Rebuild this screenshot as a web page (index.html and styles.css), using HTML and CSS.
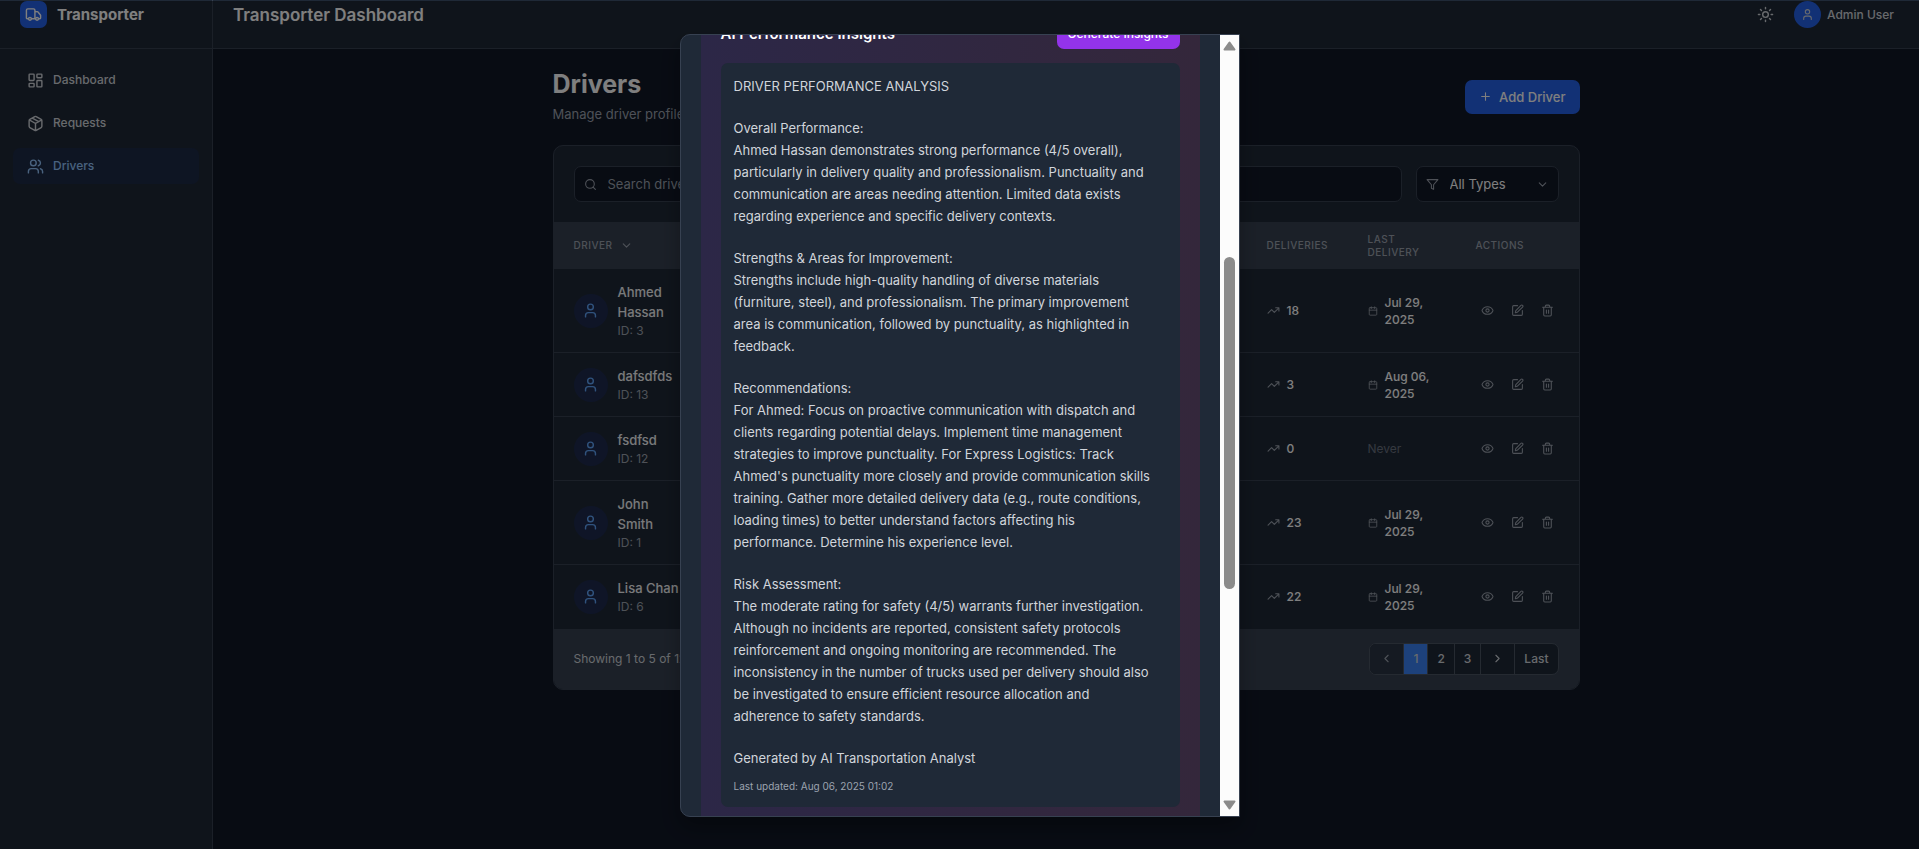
FILE: index.html
```html
<!DOCTYPE html>
<html lang="en">
<head>
<meta charset="utf-8">
<title>Transporter Dashboard</title>
<link rel="stylesheet" href="styles.css">
</head>
<body>
<svg class="sprite" aria-hidden="true">
  <symbol id="truck" viewBox="0 0 24 24"><path d="M14 18V6a2 2 0 0 0-2-2H4a2 2 0 0 0-2 2v11a1 1 0 0 0 1 1h2M15 18H9M19 18h2a1 1 0 0 0 1-1v-3.65a1 1 0 0 0-.22-.624l-3.48-4.35A1 1 0 0 0 17.52 8H14"/><circle cx="17" cy="18" r="2"/><circle cx="7" cy="18" r="2"/></symbol>
  <symbol id="dashboard" viewBox="0 0 24 24"><rect width="7" height="9" x="3" y="3" rx="1"/><rect width="7" height="5" x="14" y="3" rx="1"/><rect width="7" height="9" x="14" y="12" rx="1"/><rect width="7" height="5" x="3" y="16" rx="1"/></symbol>
  <symbol id="package" viewBox="0 0 24 24"><path d="m7.5 4.27 9 5.15M21 8a2 2 0 0 0-1-1.73l-7-4a2 2 0 0 0-2 0l-7 4A2 2 0 0 0 3 8v8a2 2 0 0 0 1 1.73l7 4a2 2 0 0 0 2 0l7-4A2 2 0 0 0 21 16ZM3.3 7l8.7 5 8.7-5M12 22V12"/></symbol>
  <symbol id="users" viewBox="0 0 24 24"><path d="M16 21v-2a4 4 0 0 0-4-4H6a4 4 0 0 0-4 4v2M22 21v-2a4 4 0 0 0-3-3.87M16 3.13a4 4 0 0 1 0 7.75"/><circle cx="9" cy="7" r="4"/></symbol>
  <symbol id="user" viewBox="0 0 24 24"><path d="M19 21v-2a4 4 0 0 0-4-4H9a4 4 0 0 0-4 4v2"/><circle cx="12" cy="7" r="4"/></symbol>
  <symbol id="sun" viewBox="0 0 24 24"><circle cx="12" cy="12" r="4"/><path d="M12 2v2M12 20v2M4.93 4.93l1.41 1.41M17.66 17.66l1.41 1.41M2 12h2M20 12h2M6.34 17.66l-1.41 1.41M19.07 4.93l-1.41 1.41"/></symbol>
  <symbol id="plus" viewBox="0 0 24 24"><path d="M5 12h14M12 5v14"/></symbol>
  <symbol id="search" viewBox="0 0 24 24"><circle cx="11" cy="11" r="8"/><path d="m21 21-4.3-4.3"/></symbol>
  <symbol id="filter" viewBox="0 0 24 24"><path d="M22 3H2l8 9.46V19l4 2v-8.54L22 3z"/></symbol>
  <symbol id="down" viewBox="0 0 24 24"><path d="m6 9 6 6 6-6"/></symbol>
  <symbol id="left" viewBox="0 0 24 24"><path d="m15 18-6-6 6-6"/></symbol>
  <symbol id="right" viewBox="0 0 24 24"><path d="m9 18 6-6-6-6"/></symbol>
  <symbol id="trend" viewBox="0 0 24 24"><path d="m22 7-8.5 8.5-5-5L2 17M16 7h6v6"/></symbol>
  <symbol id="calendar" viewBox="0 0 24 24"><rect width="18" height="18" x="3" y="4" rx="2"/><path d="M8 2v4M16 2v4M3 10h18"/></symbol>
  <symbol id="eye" viewBox="0 0 24 24"><path d="M2.06 12.35a1 1 0 0 1 0-.7 10.75 10.75 0 0 1 19.88 0 1 1 0 0 1 0 .7 10.75 10.75 0 0 1-19.88 0"/><circle cx="12" cy="12" r="3"/></symbol>
  <symbol id="edit" viewBox="0 0 24 24"><path d="M12 3H5a2 2 0 0 0-2 2v14a2 2 0 0 0 2 2h14a2 2 0 0 0 2-2v-7"/><path d="M18.375 2.625a1 1 0 0 1 3 3l-9.013 9.014a2 2 0 0 1-.853.505l-2.873.84a.5.5 0 0 1-.62-.62l.84-2.873a2 2 0 0 1 .506-.852z"/></symbol>
  <symbol id="trash" viewBox="0 0 24 24"><path d="M3 6h18M19 6v14c0 1-1 2-2 2H7c-1 0-2-1-2-2V6M8 6V4c0-1 1-2 2-2h4c1 0 2 1 2 2v2M10 11v6M14 11v6"/></symbol>
</svg>

<div class="app">
  <aside class="sidebar">
    <div class="brand">
      <span class="brand-mark"><svg class="icon icon-md"><use href="#truck"/></svg></span>
      <span class="brand-name">Transporter</span>
    </div>
    <nav class="nav">
      <a class="nav-link" href="#"><svg class="icon icon-md"><use href="#dashboard"/></svg>Dashboard</a>
      <a class="nav-link" href="#"><svg class="icon icon-md"><use href="#package"/></svg>Requests</a>
      <a class="nav-link active" href="#" aria-current="page"><svg class="icon icon-md"><use href="#users"/></svg>Drivers</a>
    </nav>
  </aside>

  <div class="content">
    <header class="topbar">
      <h2 class="topbar-title">Transporter Dashboard</h2>
      <div class="topbar-tools">
        <button class="icon-button" type="button" aria-label="Toggle theme"><svg class="icon icon-md"><use href="#sun"/></svg></button>
        <div class="account">
          <span class="account-avatar"><svg class="icon icon-sm"><use href="#user"/></svg></span>
          <span>Admin User</span>
        </div>
      </div>
    </header>

    <main class="main">
      <div class="page-head">
        <div>
          <h1 class="page-title">Drivers</h1>
          <p class="page-sub">Manage driver profiles</p>
        </div>
        <button class="add-button" type="button"><svg class="icon icon-sm"><use href="#plus"/></svg>Add Driver</button>
      </div>

      <section class="card">
        <div class="filters">
          <label class="field field-search">
            <svg class="icon icon-sm"><use href="#search"/></svg>
            <input class="control" type="text" placeholder="Search drivers..." aria-label="Search drivers">
          </label>
          <label class="field field-type">
            <svg class="icon icon-sm"><use href="#filter"/></svg>
            <select class="control" aria-label="Type"><option>All Types</option></select>
            <svg class="icon icon-sm"><use href="#down"/></svg>
          </label>
        </div>

        <table class="table">
          <colgroup><col class="col-driver"><col><col class="col-deliveries"><col class="col-last"><col class="col-actions"></colgroup>
          <thead>
            <tr>
              <th><span class="sort">Driver <svg class="icon icon-sm"><use href="#down"/></svg></span></th>
              <td></td>
              <th>Deliveries</th>
              <th>Last Delivery</th>
              <th>Actions</th>
            </tr>
          </thead>
          <tbody>
            <tr>
              <td><div class="driver"><span class="avatar"><svg class="icon icon-md"><use href="#user"/></svg></span><div><div class="name">Ahmed Hassan</div><div class="id">ID: 3</div></div></div></td>
              <td></td>
              <td><div class="stat"><svg class="icon icon-sm"><use href="#trend"/></svg>18</div></td>
              <td><div class="stat date"><svg class="icon icon-xs"><use href="#calendar"/></svg><span>Jul 29, 2025</span></div></td>
              <td><div class="actions"><button type="button" aria-label="View"><svg class="icon icon-sm"><use href="#eye"/></svg></button><button type="button" aria-label="Edit"><svg class="icon icon-sm"><use href="#edit"/></svg></button><button type="button" aria-label="Delete"><svg class="icon icon-sm"><use href="#trash"/></svg></button></div></td>
            </tr>
            <tr>
              <td><div class="driver"><span class="avatar"><svg class="icon icon-md"><use href="#user"/></svg></span><div><div class="name">dafsdfds</div><div class="id">ID: 13</div></div></div></td>
              <td></td>
              <td><div class="stat"><svg class="icon icon-sm"><use href="#trend"/></svg>3</div></td>
              <td><div class="stat date"><svg class="icon icon-xs"><use href="#calendar"/></svg><span>Aug 06, 2025</span></div></td>
              <td><div class="actions"><button type="button" aria-label="View"><svg class="icon icon-sm"><use href="#eye"/></svg></button><button type="button" aria-label="Edit"><svg class="icon icon-sm"><use href="#edit"/></svg></button><button type="button" aria-label="Delete"><svg class="icon icon-sm"><use href="#trash"/></svg></button></div></td>
            </tr>
            <tr>
              <td><div class="driver"><span class="avatar"><svg class="icon icon-md"><use href="#user"/></svg></span><div><div class="name">fsdfsd</div><div class="id">ID: 12</div></div></div></td>
              <td></td>
              <td><div class="stat"><svg class="icon icon-sm"><use href="#trend"/></svg>0</div></td>
              <td><span class="never">Never</span></td>
              <td><div class="actions"><button type="button" aria-label="View"><svg class="icon icon-sm"><use href="#eye"/></svg></button><button type="button" aria-label="Edit"><svg class="icon icon-sm"><use href="#edit"/></svg></button><button type="button" aria-label="Delete"><svg class="icon icon-sm"><use href="#trash"/></svg></button></div></td>
            </tr>
            <tr>
              <td><div class="driver"><span class="avatar"><svg class="icon icon-md"><use href="#user"/></svg></span><div><div class="name">John<br>Smith</div><div class="id">ID: 1</div></div></div></td>
              <td></td>
              <td><div class="stat"><svg class="icon icon-sm"><use href="#trend"/></svg>23</div></td>
              <td><div class="stat date"><svg class="icon icon-xs"><use href="#calendar"/></svg><span>Jul 29, 2025</span></div></td>
              <td><div class="actions"><button type="button" aria-label="View"><svg class="icon icon-sm"><use href="#eye"/></svg></button><button type="button" aria-label="Edit"><svg class="icon icon-sm"><use href="#edit"/></svg></button><button type="button" aria-label="Delete"><svg class="icon icon-sm"><use href="#trash"/></svg></button></div></td>
            </tr>
            <tr>
              <td><div class="driver"><span class="avatar"><svg class="icon icon-md"><use href="#user"/></svg></span><div><div class="name">Lisa Chan</div><div class="id">ID: 6</div></div></div></td>
              <td></td>
              <td><div class="stat"><svg class="icon icon-sm"><use href="#trend"/></svg>22</div></td>
              <td><div class="stat date"><svg class="icon icon-xs"><use href="#calendar"/></svg><span>Jul 29, 2025</span></div></td>
              <td><div class="actions"><button type="button" aria-label="View"><svg class="icon icon-sm"><use href="#eye"/></svg></button><button type="button" aria-label="Edit"><svg class="icon icon-sm"><use href="#edit"/></svg></button><button type="button" aria-label="Delete"><svg class="icon icon-sm"><use href="#trash"/></svg></button></div></td>
            </tr>
          </tbody>
        </table>

        <footer class="card-foot">
          <span>Showing 1 to 5 of 12</span>
          <div class="pager">
            <button class="page-step" type="button" aria-label="Previous" disabled><svg class="icon icon-sm"><use href="#left"/></svg></button>
            <button class="current" type="button">1</button>
            <button type="button">2</button>
            <button type="button">3</button>
            <button class="page-step" type="button" aria-label="Next"><svg class="icon icon-sm"><use href="#right"/></svg></button>
            <button type="button">Last</button>
          </div>
        </footer>
      </section>
    </main>
  </div>
</div>

<div class="overlay">
  <div class="modal" role="dialog" aria-modal="true" aria-labelledby="insights-title">
    <div class="modal-view">
      <section class="insights">
        <div class="insights-head">
          <h3 id="insights-title" class="insights-title">AI Performance Insights</h3>
          <button class="generate" type="button">Generate Insights</button>
        </div>
        <article class="report">
          <p>DRIVER PERFORMANCE ANALYSIS</p>
          <p>Overall Performance:<br>Ahmed Hassan demonstrates strong performance (4/5 overall), particularly in delivery quality and professionalism. Punctuality and communication are areas needing attention. Limited data exists regarding experience and specific delivery contexts.</p>
          <p>Strengths &amp; Areas for Improvement:<br>Strengths include high-quality handling of diverse materials (furniture, steel), and professionalism. The primary improvement area is communication, followed by punctuality, as highlighted in feedback.</p>
          <p>Recommendations:<br>For Ahmed: Focus on proactive communication with dispatch and clients regarding potential delays. Implement time management strategies to improve punctuality. For Express Logistics: Track Ahmed's punctuality more closely and provide communication skills training. Gather more detailed delivery data (e.g., route conditions, loading times) to better understand factors affecting his performance. Determine his experience level.</p>
          <p>Risk Assessment:<br>The moderate rating for safety (4/5) warrants further investigation. Although no incidents are reported, consistent safety protocols reinforcement and ongoing monitoring are recommended. The inconsistency in the number of trucks used per delivery should also be investigated to ensure efficient resource allocation and adherence to safety standards.</p>
          <p>Generated by AI Transportation Analyst</p>
          <small class="updated">Last updated: Aug 06, 2025 01:02</small>
        </article>
      </section>
    </div>
    <div class="scrollbar" aria-hidden="true">
      <svg class="arrow" viewBox="0 0 13 10"><path d="M6.500 1.500 11.500 8.500H1.500z"/></svg>
      <div class="track"><div class="thumb"></div></div>
      <svg class="arrow" viewBox="0 0 13 10"><path d="M6.500 8.500 1.500 1.500h10z"/></svg>
    </div>
  </div>
</div>
</body>
</html>
```
FILE: styles.css
```css
:root {
  --gray-900: #111827;
  --gray-800: #1f2937;
  --gray-700: #374151;
  --gray-500: #6b7280;
  --gray-400: #9ca3af;
  --gray-300: #d1d5db;
  --blue-600: #2563eb;
}

* { box-sizing: border-box; }

body {
  margin: 0;
  background: var(--gray-900);
  color: #fff;
  font-family: Inter, "Liberation Sans", sans-serif;
  font-size: 13px;
  line-height: 20px;
}

h1, h2, h3, p { margin: 0; }
button, input, select { font: inherit; color: inherit; }
button { border: 0; padding: 0; background: none; }
a { color: inherit; text-decoration: none; }

.sprite { display: none; }

.icon {
  flex: none;
  display: block;
  fill: none;
  stroke: currentColor;
  stroke-width: 2;
  stroke-linecap: round;
  stroke-linejoin: round;
}
.icon-xs { width: 10px; height: 10px; }
.icon-sm { width: 13px; height: 13px; }
.icon-md { width: 17px; height: 17px; }

.app { display: flex; min-height: 100vh; }

/* Sidebar */
.sidebar {
  flex: 0 0 213px;
  background: var(--gray-800);
  border-right: 1px solid var(--gray-700);
}
.brand {
  display: flex;
  align-items: center;
  gap: 10px;
  height: 49px;
  padding: 0 20px 19px;
  border-bottom: 1px solid var(--gray-700);
}
.brand-mark {
  display: grid;
  place-items: center;
  width: 27px;
  height: 27px;
  border-radius: 7px;
  background: var(--blue-600);
}
.brand-name { font-size: 15px; font-weight: 700; }
.nav {
  display: flex;
  flex-direction: column;
  gap: 7px;
  padding: 13px;
}
.nav-link {
  display: flex;
  align-items: center;
  gap: 9px;
  height: 36px;
  padding: 0 14px;
  border-radius: 7px;
  color: var(--gray-300);
  font-size: 12px;
  font-weight: 500;
}
.nav-link.active { background: #1c2a47; color: #93c5fd; }

/* Top bar */
.content { flex: 1; min-width: 0; }
.topbar {
  display: flex;
  align-items: center;
  justify-content: space-between;
  height: 49px;
  padding: 0 25px 19px 20px;
  background: var(--gray-800);
  border-bottom: 1px solid var(--gray-700);
}
.topbar-title { font-size: 17px; font-weight: 600; }
.topbar-tools { display: flex; align-items: center; gap: 20px; }
.icon-button { color: var(--gray-300); }
.account {
  display: flex;
  align-items: center;
  gap: 6px;
  color: var(--gray-300);
  font-size: 12px;
  font-weight: 500;
}
.account-avatar {
  display: grid;
  place-items: center;
  width: 27px;
  height: 27px;
  border-radius: 50%;
  background: var(--blue-600);
}

/* Page */
.main {
  max-width: 1067px;
  margin: 0 auto;
  padding: 20px;
}
.page-head {
  display: flex;
  align-items: center;
  justify-content: space-between;
  margin-bottom: 21px;
}
.page-title { font-size: 25px; line-height: 30px; font-weight: 700; }
.page-sub { margin-top: 5px; color: var(--gray-400); }
.add-button {
  display: flex;
  align-items: center;
  gap: 7px;
  height: 34px;
  padding: 0 14px;
  border-radius: 7px;
  background: var(--blue-600);
  font-weight: 500;
}

.card {
  border: 1px solid var(--gray-700);
  border-radius: 10px;
  background: var(--gray-800);
  overflow: hidden;
}
.filters { display: flex; gap: 14px; padding: 20px; }
.field {
  display: flex;
  align-items: center;
  gap: 11px;
  height: 36px;
  padding: 0 9px;
  border: 1px solid var(--gray-700);
  border-radius: 7px;
  background: var(--gray-900);
}
.field .icon { color: var(--gray-400); }
.field-search { flex: 1; }
.field-type { width: 143px; }
.control {
  flex: 1;
  min-width: 0;
  padding: 0;
  border: 0;
  background: none;
  appearance: none;
  outline: 0;
}
.control::placeholder { color: var(--gray-400); opacity: 1; }

.table { width: 100%; table-layout: fixed; border-collapse: collapse; }
.col-driver { width: 154px; }
.col-deliveries { width: 101px; }
.col-last { width: 108px; }
.col-actions { width: 123px; }
.table th, .table td { padding: 13px 20px; text-align: left; }
.table thead { background: var(--gray-700); }
.table th {
  height: 47px;
  padding-top: 10px;
  padding-bottom: 10px;
  color: var(--gray-400);
  font-size: 10px;
  line-height: 13px;
  font-weight: 500;
  letter-spacing: 0.05em;
  text-transform: uppercase;
}
.sort { display: flex; align-items: center; gap: 7px; }
.table tbody tr + tr { border-top: 1px solid var(--gray-700); }
.table tbody td { height: 64px; }
.driver { display: flex; align-items: center; gap: 10px; }
.avatar {
  flex: none;
  display: grid;
  place-items: center;
  width: 34px;
  height: 34px;
  border-radius: 50%;
  background: #1e2b4f;
  color: #60a5fa;
}
.name { font-weight: 500; color: #f3f4f6; }
.id { color: var(--gray-400); font-size: 12px; line-height: 17px; }
.stat {
  display: flex;
  align-items: center;
  gap: 7px;
  font-size: 12px;
  line-height: 17px;
  font-weight: 500;
}
.stat .icon { color: var(--gray-400); }
.date { margin-right: -20px; padding-right: 20px; }
.never { color: var(--gray-500); font-size: 12px; }
.actions { display: flex; gap: 7px; }
.actions button { padding: 5px; color: var(--gray-400); }

.card-foot {
  display: flex;
  align-items: center;
  justify-content: space-between;
  height: 60px;
  padding: 0 20px;
  background: var(--gray-700);
  color: var(--gray-300);
  font-size: 12px;
}
.pager {
  display: flex;
  border: 1px solid #4b5563;
  border-radius: 7px;
  background: var(--gray-800);
  overflow: hidden;
}
.pager button {
  height: 30px;
  padding: 0 9px;
  font-weight: 500;
}
.pager button + button { border-left: 1px solid #4b5563; }
.pager .page-step { padding: 0 10px; }
.pager button:disabled { background: #2b3544; color: var(--gray-400); }
.pager .current { background: #3b82f6; }

/* Driver details dialog */
.overlay {
  position: fixed;
  inset: 1px 0 0;
  display: flex;
  justify-content: center;
  padding: 33px 0 32px;
  background: rgba(0, 0, 0, 0.5);
}
.modal {
  display: flex;
  width: 560px;
  border: 1px solid var(--gray-700);
  border-radius: 10px 0 0 10px;
  background: var(--gray-800);
  overflow: hidden;
  box-shadow: 0 10px 20px rgba(0, 0, 0, 0.3);
}
.modal-view { flex: 1; min-width: 0; padding: 0 20px; overflow: hidden; }
.insights {
  min-height: calc(100% + 16px);
  margin-top: -16px;
  padding: 0 20px 20px;
  background: linear-gradient(to right, #2c2747, #34273b);
}
.insights-head {
  display: flex;
  align-items: center;
  justify-content: space-between;
  margin-bottom: 14px;
}
.insights-title { font-size: 15px; font-weight: 600; }
.generate {
  height: 30px;
  padding: 0 11px;
  border-radius: 7px;
  background: #9333ea;
  font-size: 12px;
  font-weight: 500;
}
.report {
  display: flex;
  flex-direction: column;
  gap: 20px;
  padding: 12px 26px 10px 13px;
  border-radius: 7px;
  background: var(--gray-800);
  color: var(--gray-300);
  line-height: 22px;
}
.updated {
  margin-top: -14px;
  color: var(--gray-400);
  font-size: 10px;
  line-height: 22px;
}

.scrollbar {
  flex: 0 0 19px;
  display: flex;
  flex-direction: column;
  align-items: center;
  padding: 6px 0;
  background: #fcfcfc;
}
.arrow {
  width: 13px;
  height: 10px;
  fill: #8b8b8b;
  stroke: #8b8b8b;
  stroke-width: 2;
  stroke-linejoin: round;
}
.track { flex: 1; padding-top: 206px; }
.thumb {
  width: 11px;
  height: 332px;
  border-radius: 6px;
  background: #8b8b8b;
}
```
